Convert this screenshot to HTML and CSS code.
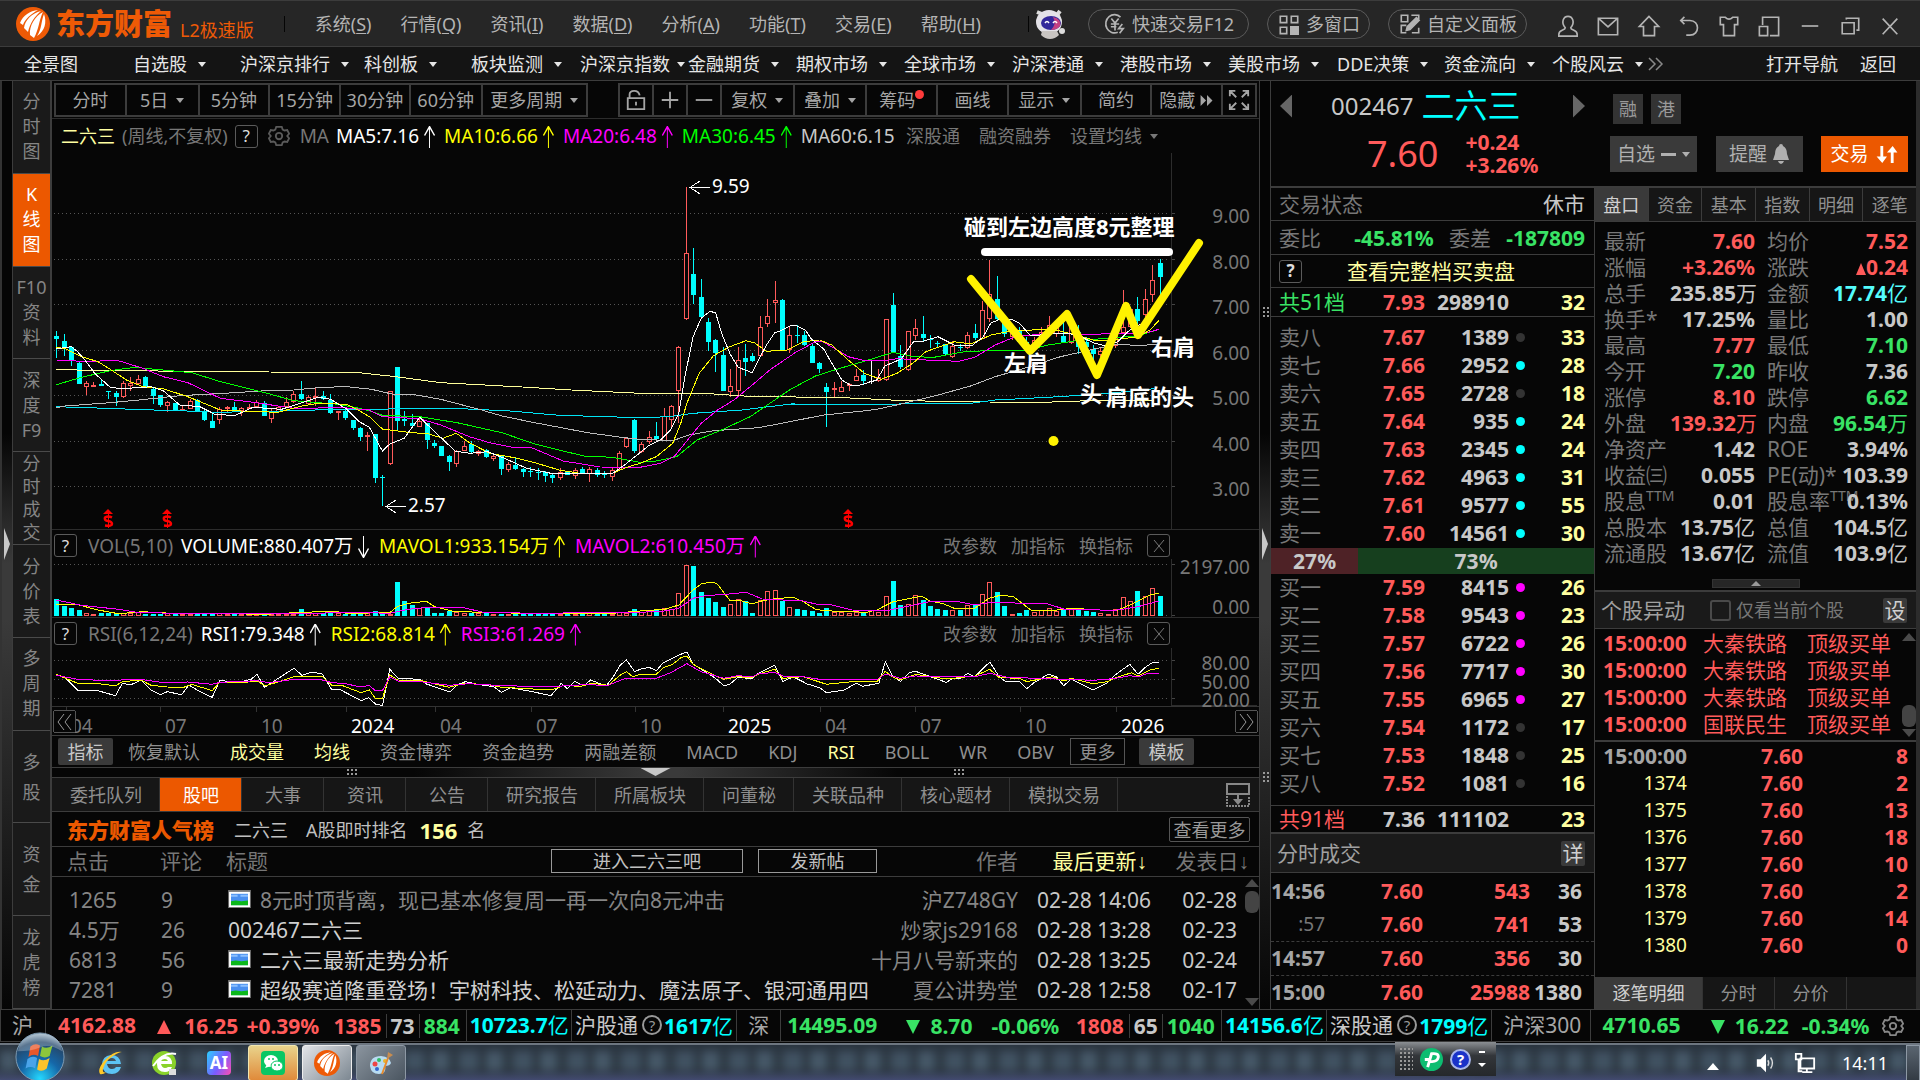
FILE: index.html
```html
<!DOCTYPE html>
<html lang="zh-CN">
<head>
<meta charset="utf-8">
<title>东方财富 L2极速版</title>
<meta name="viewport" content="width=device-width, initial-scale=1">
<link rel="stylesheet" href="styles.css">
</head>
<body>
<svg class="defs" aria-hidden="true">
  <symbol id="flame" viewBox="0 0 34 34"><circle cx="17" cy="17" r="17" fill="#ee5a06"/><path d="M4 16C7 8 14 4 22 3C15 7 9 12 7 18ZM8 21C9 13 16 6 25 4C19 9 14 16 12 25ZM14 28C13 19 19 9 27 5C23 13 23 22 18 31ZM21 29C26 22 25 14 28 7C31 15 29 24 21 29Z" fill="#fff"/></symbol>
  <symbol id="gear" viewBox="0 0 24 24"><path d="M9 2h6l1 3 2 1 3-.5 2 4-2 2.500 2 2.500-2 4-3-.5-2 1-1 3H9l-1-3-2-1-3 .5-2-4L3 12 1 9.500l2-4 3 .5 2-1z" fill="none" stroke="currentColor" stroke-width="2"/><circle cx="12" cy="12" r="3.500" fill="none" stroke="currentColor" stroke-width="2"/></symbol>
  <symbol id="pic" viewBox="0 0 24 19"><rect width="24" height="19" fill="#777"/><rect x="1" y="2" width="22" height="16" fill="#fff"/><path d="M3 4h18v12H3z" fill="#4a90f0"/><path d="M3 5h7v2H3zM13 5h8v2h-8z" fill="#8cc0ff"/><path d="M3 12l5-1 6 1 7-1v5H3z" fill="#0bb81a"/></symbol>
</svg>

<header class="titlebar">
  <svg class="logo"><use href="#flame"/></svg>
  <span class="brand">东方财富</span><span class="edition">L2极速版</span>
  <nav class="menus">
    <button>系统(<u>S</u>)</button><button>行情(<u>Q</u>)</button><button>资讯(<u>I</u>)</button><button>数据(<u>D</u>)</button><button>分析(<u>A</u>)</button><button>功能(<u>T</u>)</button><button>交易(<u>E</u>)</button><button>帮助(<u>H</u>)</button>
  </nav>
  <svg class="robot" viewBox="0 0 32 30"><path d="M3 3l5 2M26 2l-3 4" stroke="#ddd" stroke-width="4"/><ellipse cx="15" cy="13" rx="13" ry="12" fill="#e4e2e8"/><ellipse cx="17" cy="14" rx="10" ry="7" fill="#33289b"/><path d="M19 8q9 2 7 9-3 4-9 4 6-6 2-13z" fill="#c34083"/><path d="M11 14q2-3 4 0M19 14q2-3 4 0" stroke="#fff" stroke-width="1.500" fill="none"/><path d="M8 22h15l2 4q-4 4-9 4t-9-4z" fill="#c9c5c2"/><circle cx="28" cy="22" r="3" fill="#ddd"/></svg>
  <div class="pills">
    <button class="pill wide"><svg viewBox="0 0 24 24"><path d="M18 4.500A9.500 10 0 1 0 15 21M8 6l4 5 4-5M7.500 12h9M7.500 15h6M12 11v8M20 12l-4 5h5l-4 5"/></svg>快速交易F12</button>
    <button class="pill"><svg viewBox="0 0 24 24"><path d="M2.500 3.500h7v7h-7zM14.500 3.500h7v7h-7zM2.500 15.500h7v7h-7z"/><path d="M14 15h8v8h-8z" fill="currentColor"/></svg>多窗口</button>
    <button class="pill"><svg viewBox="0 0 24 24"><path d="M2.500 2.500h7v7h-7zM13.500 2.500h8v4M8 21.500H2.500v-8H8M14 21.500h7.500V16"/><path d="M8 19l1-4L19 5l3 3-10 10z" fill="currentColor"/></svg>自定义面板</button>
  </div>
  <div class="wintools">
    <button aria-label="用户"><svg viewBox="0 0 24 24"><path d="M9 14C4 8 7 1.500 12 1.500S20 8 15 14c0 3 7 2 7 7v2H2v-2c0-5 7-4 7-7z"/></svg></button>
    <button aria-label="邮件"><svg viewBox="0 0 24 24"><path d="M1.500 3.500h21v18h-21zM2 4l10 9L22 4"/></svg></button>
    <button aria-label="主页"><svg viewBox="0 0 24 24"><path d="M12 1.500L1.500 12.500H6v10h12v-10h4.500z"/></svg></button>
    <button aria-label="撤销"><svg viewBox="0 0 24 24"><path d="M7 2L3 6l4 4M3 6h10c11 0 11 16 0 16H9"/></svg></button>
    <button aria-label="换肤"><svg viewBox="0 0 24 24"><path d="M8 2.500q4 4 8 0h5.500v8H18v12H6v-12H2.500v-8z"/></svg></button>
    <button aria-label="弹出"><svg viewBox="0 0 24 24"><path d="M5 11V2.500h17.500v20H13M1.500 12.500h9v10h-9z"/></svg></button>
    <button aria-label="最小化"><svg viewBox="0 0 24 24"><path d="M3 12h18"/></svg></button>
    <button aria-label="还原"><svg viewBox="0 0 24 24"><path d="M3.500 8.500h13v12h-13zM8 5V3.500h13.500v13H19"/></svg></button>
    <button aria-label="关闭"><svg viewBox="0 0 24 24"><path d="M4 4l16 17M20 4L4 21"/></svg></button>
  </div>
</header>

<nav class="nav">
  <a href="#">全景图</a><a href="#" class="dd">自选股</a><a href="#" class="dd">沪深京排行</a><a href="#" class="dd">科创板</a><a href="#" class="dd">板块监测</a><a href="#" class="dd tight">沪深京指数</a><a href="#" class="dd">金融期货</a><a href="#" class="dd">期权市场</a><a href="#" class="dd">全球市场</a><a href="#" class="dd">沪深港通</a><a href="#" class="dd">港股市场</a><a href="#" class="dd">美股市场</a><a href="#" class="dd">DDE决策</a><a href="#" class="dd">资金流向</a><a href="#" class="dd">个股风云</a><a href="#" aria-label="更多"><svg class="chev" viewBox="0 0 16 14"><path d="M1 1l6 6-6 6M8 1l6 6-6 6"/></svg></a><a href="#">打开导航</a><a href="#">返回</a>
</nav>

<main class="main">
  <div class="gutter left"><i class="grip-arrow"></i></div>
  <nav class="side">
    <a href="#">分<br>时<br>图</a><a href="#" class="on">K<br>线<br>图</a><a href="#">F10<br>资<br>料</a><a href="#">深<br>度<br>F9</a><a href="#" class="four">分<br>时<br>成<br>交</a><a href="#">分<br>价<br>表</a><a href="#">多<br>周<br>期</a><a href="#" class="two">多<br>股</a><a href="#" class="two">资<br>金</a><a href="#">龙<br>虎<br>榜</a>
  </nav>

  <section class="work">
    <div class="tools">
      <div class="periods">
        <button>分时</button><button class="dd">5日</button><button>5分钟</button><button>15分钟</button><button>30分钟</button><button>60分钟</button><button class="dd">更多周期</button>
      </div>
      <div class="actions">
        <button aria-label="锁定"><svg viewBox="0 0 24 24"><path d="M3 10h18v12H3zM5 10V6q0-4 5-4t6 5M12 14v4"/></svg></button><button aria-label="放大"><svg viewBox="0 0 24 24"><path d="M3 12h18M12 3v18"/></svg></button><button aria-label="缩小"><svg viewBox="0 0 24 24"><path d="M3 12h18"/></svg></button><button class="dd">复权</button><button class="dd">叠加</button><button class="new">筹码</button><button>画线</button><button class="dd">显示</button><button>简约</button><button>隐藏<svg class="ff" viewBox="0 0 14 12"><path d="M0 0l6 6-6 6zM7 0l6 6-6 6z"/></svg></button><button aria-label="全屏"><svg viewBox="0 0 24 24"><path d="M2 8V2h6M16 2h6v6M22 16v6h-6M8 22H2v-6M3 3l6 6M21 3l-6 6M21 21l-6-6M3 21l6-6"/></svg></button>
      </div>
    </div>

    <div class="info">
      <span class="pale">二六三</span><span class="dim">(周线,不复权)</span><button class="q">?</button><svg class="gear"><use href="#gear"/></svg><span class="dim ma">MA</span>
      <span class="white ma">MA5:7.16<i class="up"></i></span><span class="yellow ma">MA10:6.66<i class="up"></i></span><span class="magenta ma">MA20:6.48<i class="up"></i></span><span class="lime ma">MA30:6.45<i class="up"></i></span><span class="silver ma">MA60:6.15</span>
      <span class="links dim"><a href="#">深股通</a><a href="#">融资融券</a><a href="#" class="dd">设置均线</a></span>
    </div>

    <svg class="chart" id="price" viewBox="0 0 1207 376" role="img" aria-label="周K线图"></svg>

    <div class="subhead">
      <button class="q">?</button><span class="dim">VOL(5,10)</span><span class="white">VOLUME:880.407万<i class="down"></i></span><span class="yellow">MAVOL1:933.154万<i class="up"></i></span><span class="magenta">MAVOL2:610.450万<i class="up"></i></span>
      <span class="ops"><a href="#">改参数</a><a href="#">加指标</a><a href="#">换指标</a><button class="q" aria-label="关闭"><svg viewBox="0 0 12 14"><path d="M1 1l10 12M11 1L1 13"/></svg></button></span>
    </div>
    <svg class="chart" id="volume" viewBox="0 0 1207 58" role="img" aria-label="成交量"></svg>

    <div class="subhead">
      <button class="q">?</button><span class="dim">RSI(6,12,24)</span><span class="white">RSI1:79.348<i class="up"></i></span><span class="yellow">RSI2:68.814<i class="up"></i></span><span class="magenta">RSI3:61.269<i class="up"></i></span>
      <span class="ops"><a href="#">改参数</a><a href="#">加指标</a><a href="#">换指标</a><button class="q" aria-label="关闭"><svg viewBox="0 0 12 14"><path d="M1 1l10 12M11 1L1 13"/></svg></button></span>
    </div>
    <svg class="chart" id="rsi" viewBox="0 0 1207 59" role="img" aria-label="RSI"></svg>
    <svg class="chart" id="dates" viewBox="0 0 1207 28"></svg>

    <div class="indicators">
      <button class="solid">指标</button>
      <div class="names"><button>恢复默认</button><button class="pale">成交量</button><button class="pale">均线</button><button>资金博弈</button><button>资金趋势</button><button>两融差额</button><button>MACD</button><button>KDJ</button><button class="pale">RSI</button><button>BOLL</button><button>WR</button><button>OBV</button></div>
      <button class="outline">更多</button><button class="solid">模板</button>
    </div>
    <div class="splitter"><i class="dots"></i><i class="tri"></i><i class="dots"></i></div>

    <div class="tabs">
      <button>委托队列</button><button class="on">股吧</button><button>大事</button><button>资讯</button><button>公告</button><button>研究报告</button><button>所属板块</button><button>问董秘</button><button>关联品种</button><button>核心题材</button><button>模拟交易</button>
      <svg class="dock" viewBox="0 0 24 24"><path d="M1 1h22v10H1zM12 11v8" fill="none" stroke="#888" stroke-width="2"/><path d="M7 16h10l-5 6z" fill="#888"/><path d="M1 13v10h22V13" fill="none" stroke="#aaa" stroke-width="1.500" stroke-dasharray="2 1"/></svg>
    </div>
    <div class="rank"><b class="rank-logo">东方财富人气榜</b><span>二六三</span><span>A股即时排名</span><strong>156</strong><span>名</span><button>查看更多</button></div>

    <div class="posts">
      <table>
        <colgroup><col class="p1"><col class="p2"><col><col class="p4"><col class="p5"><col class="p6"><col class="p7"></colgroup>
        <thead><tr><th>点击</th><th>评论</th><th><div class="thead-title">标题<button class="enter">进入二六三吧</button><button class="post">发新帖</button></div></th><th>作者</th><th class="pale">最后更新<i class="arr">↓</i></th><th colspan="2">发表日<i class="arr">↓</i></th></tr></thead>
        <tbody>
          <tr><td>1265</td><td>9</td><td class="read"><svg><use href="#pic"/></svg>8元时顶背离，现已基本修复周一再一次向8元冲击</td><td>沪Z748GY</td><td>02-28 14:06</td><td>02-28</td><td></td></tr>
          <tr><td>4.5万</td><td>26</td><td>002467二六三</td><td>炒家js29168</td><td>02-28 13:28</td><td>02-23</td><td></td></tr>
          <tr><td>6813</td><td>56</td><td><svg><use href="#pic"/></svg>二六三最新走势分析</td><td>十月八号新来的</td><td>02-28 13:25</td><td>02-24</td><td></td></tr>
          <tr><td>7281</td><td>9</td><td><svg><use href="#pic"/></svg>超级赛道隆重登场！宇树科技、松延动力、魔法原子、银河通用四</td><td>夏公讲势堂</td><td>02-28 12:58</td><td>02-17</td><td></td></tr>
        </tbody>
      </table>
      <div class="scroll"><i class="thumb"></i></div>
    </div>
  </section>

  <div class="gutter mid"><i class="dots"></i><i class="grip-arrow"></i><i class="dots"></i></div>

  <div class="rail">
    <section class="quote">
      <div class="quote-main">
        <div class="symbol"><button class="prev" aria-label="上一只"></button><span class="code">002467</span><span class="name">二六三</span><button class="next" aria-label="下一只"></button></div>
        <div class="last"><span class="px">7.60</span><span class="chg">+0.24<br>+3.26%</span></div>
      </div>
      <div class="quote-side">
        <div class="tags"><span>融</span><span>港</span></div>
        <div class="btns"><button>自选<i class="minus"></i><i class="caret"></i></button><button>提醒<svg viewBox="0 0 16 20"><path d="M8 0q2 0 2 2 4 2 4 8l2 6H0l2-6q0-6 4-8 0-2 2-2zM5 17h6q-1 3-3 3t-3-3z"/></svg></button><button class="trade">交易<svg viewBox="0 0 24 18"><path d="M5 0h3v11h4l-5 7-6-7h4zM16 18h3V7h4l-5-7-6 7h4z"/></svg></button></div>
      </div>
    </section>
    <div class="cols">
      <section class="book">
        <div class="bar h33"><span>交易状态</span><span class="silver">休市</span></div>
        <div class="bar h34"><span>委比</span><b class="g">-45.81%</b><span>委差</span><b class="g">-187809</b></div>
        <div class="bar h33 full"><button class="q">?</button><a href="#" class="pale">查看完整档买卖盘</a></div>
        <table class="lv sum"><tr><th class="g">共51档</th><td class="r">7.93</td><td>298910</td><td></td><td>32</td></tr></table>
        <table class="lv sell">
          <tr><th>卖八</th><td class="r">7.67</td><td>1389</td><td><i class="dot"></i></td><td>33</td></tr>
          <tr><th>卖七</th><td class="r">7.66</td><td>2952</td><td><i class="dot c"></i></td><td>28</td></tr>
          <tr><th>卖六</th><td class="r">7.65</td><td>2728</td><td><i class="dot"></i></td><td>18</td></tr>
          <tr><th>卖五</th><td class="r">7.64</td><td>935</td><td><i class="dot c"></i></td><td>24</td></tr>
          <tr><th>卖四</th><td class="r">7.63</td><td>2345</td><td><i class="dot c"></i></td><td>24</td></tr>
          <tr><th>卖三</th><td class="r">7.62</td><td>4963</td><td><i class="dot c"></i></td><td>31</td></tr>
          <tr><th>卖二</th><td class="r">7.61</td><td>9577</td><td><i class="dot c"></i></td><td>55</td></tr>
          <tr><th>卖一</th><td class="r">7.60</td><td>14561</td><td><i class="dot c"></i></td><td>30</td></tr>
        </table>
        <div class="ratio"><b style="width:27%">27%</b><b style="width:73%">73%</b></div>
        <table class="lv buy">
          <tr><th>买一</th><td class="r">7.59</td><td>8415</td><td><i class="dot m"></i></td><td>26</td></tr>
          <tr><th>买二</th><td class="r">7.58</td><td>9543</td><td><i class="dot m"></i></td><td>23</td></tr>
          <tr><th>买三</th><td class="r">7.57</td><td>6722</td><td><i class="dot m"></i></td><td>26</td></tr>
          <tr><th>买四</th><td class="r">7.56</td><td>7717</td><td><i class="dot m"></i></td><td>30</td></tr>
          <tr><th>买五</th><td class="r">7.55</td><td>6965</td><td><i class="dot m"></i></td><td>27</td></tr>
          <tr><th>买六</th><td class="r">7.54</td><td>1172</td><td><i class="dot"></i></td><td>17</td></tr>
          <tr><th>买七</th><td class="r">7.53</td><td>1848</td><td><i class="dot"></i></td><td>25</td></tr>
          <tr><th>买八</th><td class="r">7.52</td><td>1081</td><td><i class="dot"></i></td><td>16</td></tr>
        </table>
        <table class="lv sum last-sum"><tr><th class="r">共91档</th><td>7.36</td><td>111102</td><td></td><td>23</td></tr></table>
        <div class="panel-head"><span>分时成交</span><button>详</button></div>
        <table class="deals">
          <tr><td>14:56</td><td>7.60</td><td>543</td><td>36</td></tr>
          <tr class="dash"><td class="thin">:57</td><td>7.60</td><td>741</td><td>53</td></tr>
          <tr class="dash"><td>14:57</td><td>7.60</td><td>356</td><td>30</td></tr>
          <tr><td>15:00</td><td>7.60</td><td>25988</td><td>1380</td></tr>
        </table>
      </section>

      <section class="detail">
        <div class="rtabs"><button class="on">盘口</button><button>资金</button><button>基本</button><button>指数</button><button>明细</button><button>逐笔</button></div>
        <table class="facts">
          <tr><th>最新</th><td class="r">7.60</td><th>均价</th><td class="r">7.52</td></tr>
          <tr><th>涨幅</th><td class="r">+3.26%</td><th>涨跌</th><td class="r"><i class="tri-up"></i>0.24</td></tr>
          <tr><th>总手</th><td>235.85<i>万</i></td><th>金额</th><td class="aqua">17.74<i>亿</i></td></tr>
          <tr><th>换手*</th><td>17.25%</td><th>量比</th><td>1.00</td></tr>
          <tr><th>最高</th><td class="r">7.77</td><th>最低</th><td class="g">7.10</td></tr>
          <tr><th>今开</th><td class="g">7.20</td><th>昨收</th><td>7.36</td></tr>
          <tr><th>涨停</th><td class="r">8.10</td><th>跌停</th><td class="g">6.62</td></tr>
          <tr><th>外盘</th><td class="r">139.32<i>万</i></td><th>内盘</th><td class="g">96.54<i>万</i></td></tr>
          <tr><th>净资产</th><td>1.42</td><th>ROE</th><td>3.94%</td></tr>
          <tr><th>收益<small>㈢</small></th><td>0.055</td><th>PE(动)*</th><td>103.39</td></tr>
          <tr><th>股息<sup>TTM</sup></th><td>0.01</td><th>股息率<sup>TTM</sup></th><td>0.13%</td></tr>
          <tr><th>总股本</th><td>13.75<i>亿</i></td><th>总值</th><td>104.5<i>亿</i></td></tr>
          <tr><th>流通股</th><td>13.67<i>亿</i></td><th>流值</th><td>103.9<i>亿</i></td></tr>
        </table>
        <button class="fold" aria-label="收起"><i></i></button>
        <div class="panel-head moves-head"><span>个股异动</span><label><input type="checkbox">仅看当前个股</label><button>设</button></div>
        <div class="moves">
          <table>
            <tr><td>15:00:00</td><td>大秦铁路</td><td>顶级买单</td></tr>
            <tr><td>15:00:00</td><td>大秦铁路</td><td>顶级买单</td></tr>
            <tr><td>15:00:00</td><td>大秦铁路</td><td>顶级买单</td></tr>
            <tr><td>15:00:00</td><td>国联民生</td><td>顶级买单</td></tr>
          </table>
          <div class="scroll low"><i class="thumb"></i></div>
        </div>
        <table class="ticks">
          <tr><td class="time">15:00:00</td><td>7.60</td><td>8</td></tr>
          <tr><td>1374</td><td>7.60</td><td>2</td></tr>
          <tr><td>1375</td><td>7.60</td><td>13</td></tr>
          <tr><td>1376</td><td>7.60</td><td>18</td></tr>
          <tr><td>1377</td><td>7.60</td><td>10</td></tr>
          <tr><td>1378</td><td>7.60</td><td>2</td></tr>
          <tr><td>1379</td><td>7.60</td><td>14</td></tr>
          <tr><td>1380</td><td>7.60</td><td>0</td></tr>
        </table>
        <div class="btabs"><button class="on">逐笔明细</button><button>分时</button><button>分价</button></div>
      </section>
    </div>
  </div>
  <div class="edge"></div>
</main>

<footer class="status">
  <span class="sep idx">沪</span><b class="r n1">4162.88</b><b class="r"><i class="tri-up"></i></b><b class="r">16.25</b><b class="r">+0.39%</b><b class="r">1385</b><b class="sep-s">73</b><b class="g sep-s">884</b><b class="cy sep">10723.7<i>亿</i></b><span class="sep lab">沪股通<em>?</em></span><b class="cy">1617<i>亿</i></b><span class="sep idx">深</span><b class="g sep n1">14495.09</b><b class="g"><i class="tri-dn"></i></b><b class="g">8.70</b><b class="g">-0.06%</b><b class="r">1808</b><b class="sep-s">65</b><b class="g sep-s">1040</b><b class="cy sep">14156.6<i>亿</i></b><span class="sep lab">深股通<em>?</em></span><b class="cy">1799<i>亿</i></b><span class="sep idx">沪深300</span><b class="g sep n2">4710.65</b><b class="g"><i class="tri-dn"></i></b><b class="g">16.22</b><b class="g">-0.34%</b><svg class="gear"><use href="#gear"/></svg>
</footer>

<div class="taskbar">
  <div class="glass"><i></i></div>
  <button class="start" aria-label="开始"><svg viewBox="0 0 52 52"><defs><radialGradient id="orb" cx=".5" cy=".95" r=".95"><stop offset="0" stop-color="#25d8ff"/><stop offset=".45" stop-color="#1567a8"/><stop offset=".8" stop-color="#24486c"/><stop offset="1" stop-color="#a9c0d0"/></radialGradient></defs><circle cx="26" cy="26" r="25" fill="url(#orb)" stroke="#7f9db5"/><path d="M16 15q5-4 10-1l-2 11q-5-3-10 1z" fill="#e8572a"/><path d="M28 15q5 3 11-1l-3 11q-5 3-10 0z" fill="#8cc63c"/><path d="M13 28q5-4 10-1l-2 11q-5-3-10 0z" fill="#4aa4ea"/><path d="M25 28q5 3 11-1l-3 11q-5 4-10 1z" fill="#fdc42d"/><path d="M3 20Q6 3 26 2t23 18Q36 12 26 16T3 20z" fill="#fff" opacity=".25"/></svg></button>
  <button class="app" aria-label="IE"><svg viewBox="0 0 26 26"><path d="M23 14H9q1 5 5 5 3 0 4-2h5q-2 7-9 7-9 0-10-9Q4 6 13 5q9 0 10 9zM9 11h9q-1-3-4-3-4 0-5 3z" fill="#5cc4f5"/><path d="M24 2q-7-2-17 8-8 9-5 14 2 1 7-2-5 2-4-3Q7 11 15 6q6-4 9-4z" fill="#ffc928"/></svg></button>
  <button class="app" aria-label="浏览器"><svg viewBox="0 0 26 26"><circle cx="12" cy="13" r="12" fill="#8ad22a"/><path d="M20 14H9q1 4 4 4 2 0 3-1h4q-2 5-7 5-8 0-8-8 0-8 8-8 7 0 7 8zM9 11h7q-1-2-3-2-3 0-4 2z" fill="#fff"/><path d="M1 16Q12 1 24 4" stroke="#fff" fill="none" stroke-width="2"/><path d="M17 19h7v6h-7z" fill="#ddd"/></svg></button>
  <button class="app" aria-label="AI"><span class="ai">AI</span></button>
  <button class="app win wechat" aria-label="微信"><svg viewBox="0 0 26 26"><rect x="1" y="1" width="24" height="24" rx="4" fill="#09c764"/><ellipse cx="11" cy="11" rx="7" ry="6" fill="#fff"/><ellipse cx="17" cy="16" rx="6" ry="5" fill="#fff" stroke="#09c764"/><path d="M5 18l2-4 4 2z" fill="#fff"/><g fill="#09c764"><circle cx="9" cy="9" r="1"/><circle cx="13" cy="9" r="1"/><circle cx="15" cy="15" r="1"/><circle cx="19" cy="15" r="1"/></g></svg></button>
  <button class="app win active" aria-label="东方财富"><svg><use href="#flame"/></svg></button>
  <button class="app win" aria-label="画图"><svg viewBox="0 0 26 26"><path d="M2 16Q2 6 13 6q9 1 10 7-1 3-6 3 2 7-6 8-8 0-9-8z" fill="#b8dcf2"/><circle cx="7" cy="14" r="2.500" fill="#e44"/><circle cx="11" cy="10" r="2" fill="#3b6"/><circle cx="17" cy="11" r="2" fill="#e9b52c"/><circle cx="9" cy="19" r="2" fill="#36c"/><path d="M14 24l6-16" stroke="#e78b2c" stroke-width="2"/><path d="M19 9l1-7 5 3z" fill="#c98d4f"/></svg></button>
  <div class="langbar"><i class="dots"></i><svg viewBox="0 0 24 24"><circle cx="12" cy="12" r="12" fill="#0dbd71"/><path d="M8 20l4-14q8-1 7 4t-9 4M5 12h5" fill="none" stroke="#fff" stroke-width="3"/></svg><span class="help">?</span><svg class="lb" viewBox="0 0 8 24"><path d="M1 4h6v2H1zM0 16h8l-4 4z" fill="#fff"/></svg></div>
  <div class="tray">
    <svg class="t-up" viewBox="0 0 12 8"><path d="M6 0l6 7H0z" fill="#fff"/></svg>
    <svg class="t-ic" viewBox="0 0 24 24"><path d="M2 8h4l6-6v20l-6-6H2z" fill="#fff"/><path d="M14 9q2 3 0 6M17 6q4 6 0 12" stroke="#ddd" fill="none" stroke-width="1.500"/></svg>
    <svg class="t-ic" viewBox="0 0 24 24"><path d="M7 7h15v11H7zM14 18v4M9 22h11M2 2h6v6H2zM5 8v13h4" stroke="#fff" fill="none" stroke-width="2"/></svg>
    <time>14:11</time>
  </div>
  <button class="desk" aria-label="显示桌面"></button>
</div>
<script src="chart.js"></script>
</body>
</html>
```

FILE: styles.css
```css
*{box-sizing:border-box}
html,body{margin:0;padding:0}
body{background:#060606;color:#8f8f8f;font:18px/24px "Noto Sans","Noto Sans CJK SC",sans-serif;min-height:100vh;display:flex;flex-direction:column;overflow-x:hidden}
button{background:none;border:0;padding:0;margin:0;color:inherit;font:inherit;white-space:nowrap}
a{color:inherit;text-decoration:none;white-space:nowrap}
i,em{font-style:normal}
table{border-collapse:collapse;border-spacing:0;table-layout:fixed;width:100%}
th,td{padding:0;font-weight:400;white-space:nowrap}
.defs{display:none}
.r{color:#ff5a5a !important}.g{color:#39e365 !important}.cy{color:#0ff}.aqua{color:#54fcfc !important}
.pale{color:#ffffa0 !important}.white{color:#fff}.yellow{color:#ff0}.magenta{color:#f0f}.lime{color:#0f0}.silver{color:#c8c8c8}.dim{color:#777}
.dd::after{content:"";display:inline-block;border:4px solid transparent;border-top:5px solid currentColor;border-bottom:0;margin-left:8px;vertical-align:4px}

/* title bar */
.titlebar{height:47px;background:#262626;border-top:1px solid #3c3c3c;border-bottom:1px solid #3c3c3c;display:flex;align-items:center;color:#b4b4b4;padding-left:16px}
.logo{width:34px;height:34px;flex:none}
.brand{font-weight:900;font-size:29px;color:#ee5a06;margin-left:6px;white-space:nowrap}
.edition{color:#ee5a06;margin:12px 30px 0 8px;white-space:nowrap}
.menus{border-left:1px solid #050505;border-right:1px solid #050505;height:16px;display:flex;align-items:center;justify-content:space-between;padding:0 47px 0 30px;flex:1 1 0}
.menus u{text-underline-offset:2px}
.robot{width:32px;height:30px;margin:0 22px 0 5px;flex:none}
.pills{display:flex;gap:18px}
.pill{height:30px;border:1px solid #5a5a5a;border-radius:15px;padding:0 9px;display:flex;align-items:center;gap:5px}
.pill.wide{padding:0 14px}
.pill svg,.wintools svg,.actions svg{width:24px;height:22px;fill:none;stroke:currentColor;stroke-width:1.800}
.wintools{flex:none;width:393px;display:flex;justify-content:space-between;padding:4px 18px 0 29px}
.wintools button{display:flex}

/* navigation */
.nav{height:34px;background:#141414;border-bottom:1px solid #3c3c3c;color:#e6e6e6;padding-left:24px;display:grid;align-items:center;grid-template-columns:109fr 107fr 124fr 107fr 109fr 108fr 108fr 108fr 108fr 108fr 108fr 109fr 107fr 108fr 96fr 118fr 94fr 60fr}
.nav a{min-width:0}
.nav .dd::after{margin-left:11px}
.nav .dd.tight::after{margin-left:7px}
.chev{width:16px;height:14px;fill:none;stroke:#888;stroke-width:1.500;display:block}

.main{display:flex;flex:1 0 auto}
.gutter{background:linear-gradient(#050505 0 38%,#3a3a3a 52%,#3a3a3a 58%,#060606);flex:none;position:relative}
.gutter.left{width:12px;border-left:2px solid #333}
.gutter.mid{width:10px}
.gutter .grip-arrow{position:absolute;left:2px;top:447px;width:6px;height:32px;background:#c8c8c8;clip-path:polygon(0 0,100% 50%,0 100%)}
.dots{display:block;width:12px;height:8px;background:radial-gradient(#999 1px,transparent 1px) 0 0/4px 4px}
.gutter.mid .dots{position:absolute;left:2px;top:225px;width:8px;height:12px}
.gutter.mid .dots:last-child{top:690px}

/* side menu */
.side{width:40px;flex:none;border-left:1px solid #3c3c3c;border-right:2px solid #3c3c3c;background:#1a1a1a;display:flex;flex-direction:column;color:#858585}
.side a{flex:1;display:flex;align-items:center;justify-content:center;text-align:center;line-height:25px;border-bottom:1px solid #4a4a4a}
.side .on{background:#ec5800;color:#fff}
.side .four{line-height:23px}
.side .two{line-height:30px}

/* chart column */
.work{flex:1 1 0;min-width:0;border-right:1px solid #3c3c3c}
.tools{height:38px;padding:2px 2px 0 2px;display:flex;border-bottom:1px solid #2c2c2c;color:#a5a5a5}
.periods,.actions{display:grid;height:34px;border-left:2px solid #3c3c3c}
.periods{flex:534 1 0;grid-template-columns:71fr 73fr 71fr 71fr 70fr 72fr 106fr;margin-right:30px}
.actions{flex:639 1 0;grid-template-columns:34fr 34fr 34fr 73fr 73fr 71fr 71fr 73fr 71fr 71fr 34fr}
.periods button,.actions button{min-width:0;border:2px solid #3c3c3c;border-left:0;display:flex;align-items:center;justify-content:center}
.actions svg{stroke-width:2}
.actions .ff{width:14px;height:11px;fill:currentColor;stroke:none;margin-left:5px}
.new::after{content:"";width:9px;height:9px;border-radius:50%;background:#ff3b3b;margin-top:-12px}
.info{height:34px;margin-left:9px;display:flex;align-items:center;white-space:nowrap;padding-right:101px;gap:7px}
.ma,.subhead{font-size:19px}
.q{width:23px;height:23px;border:1px solid #5a5a5a;border-radius:3px;color:#ddd;font-size:17px;line-height:20px;text-align:center;flex:none}
.gear{width:22px;height:22px;color:#5a5a5a;flex:none;margin:0 3px}
.up,.down{display:inline-block;width:11px;height:22px;margin:0 5px;vertical-align:-5px;background:currentColor;clip-path:polygon(5px 0,6px 0,11px 9px,10px 10px,6px 3px,6px 22px,5px 22px,5px 3px,1px 10px,0 9px)}
.info .up{margin:0 2px 0 5px}
.down{transform:rotate(180deg)}
.links{margin-left:auto;display:flex;gap:19px}
.chart{display:block;width:100%;height:auto}
.chart path,.chart rect,.chart polyline{shape-rendering:crispEdges}
.chart .smooth{shape-rendering:auto}
.subhead{height:30px;border-top:1px solid #2c2c2c;display:flex;align-items:center;padding:2px 89px 0 2px;white-space:nowrap;gap:5px}
.subhead .q+span{margin:0 3px 0 6px}
.ops{margin-left:auto;display:flex;gap:14px;color:#777;font-size:18px;align-items:center}
.ops svg{width:12px;height:14px;stroke:#777;fill:none;display:block;margin:auto}
#rsi{margin-top:1px}
.axis{fill:#777;font-size:19px;text-anchor:end}
.call{fill:#fff;font-size:19px}
.note{fill:#fff;font-size:22px;font-weight:700}
.date{fill:#777;font-size:19px}.date.year{fill:#fff}
.indicators{height:32px;border-top:1px solid #3c3c3c;display:flex;align-items:center;padding:0 65px 0 6px}
.indicators .solid{background:#3a3a3a;color:#c8c8c8;width:55px;height:27px;border-radius:2px}
.indicators .outline{border:1px solid #555;width:55px;height:27px;margin-right:14px}
.names{flex:1;display:flex;justify-content:space-between;padding:0 16px 0 15px}
.splitter{height:11px;border-top:1px solid #3c3c3c;border-bottom:1px solid #3c3c3c;background:linear-gradient(90deg,#060606 30%,#3a3a3a 50%,#3a3a3a 52%,#060606 70%);display:flex;justify-content:space-between;padding:0 294px}
.tri{width:30px;height:8px;background:#c8c8c8;clip-path:polygon(0 0,100% 0,50% 100%)}
.tabs{height:34px;background:#161616;border-bottom:1px solid #3c3c3c;display:flex;align-items:stretch}
.tabs button{padding:1px 17px 0 18px;min-width:82px;border-right:1px solid #333}
.tabs .on{background:#ec5800;color:#fff}
.dock{width:24px;height:24px;margin:5px 9px 0 auto}
.rank{height:35px;border-bottom:1px solid #3c3c3c;display:flex;align-items:center;padding:1px 9px 0 15px;color:#c0c0c0;white-space:nowrap}
.rank-logo{color:#ec5800;font-size:21px;font-weight:900;margin-right:20px}
.rank span+span{margin-left:18px}
.rank strong{color:#ffffa0;font-size:22px;margin:0 10px 0 12px}
.rank button{margin-left:auto;border:1px solid #555;border-radius:2px;color:#999;width:81px;height:25px;line-height:22px;font-size:18px}
.posts{position:relative;font-size:21px;padding-bottom:4px}
.posts col.p1{width:108px}.posts col.p2{width:66px}.posts col.p4{width:150px}.posts col.p5{width:133px}.posts col.p6{width:86px}.posts col.p7{width:22px}
.posts thead tr{height:29px;border-bottom:1px solid #3c3c3c}
.posts th{text-align:left;color:#777}
.posts th:first-child{padding-left:15px}
.posts td:first-child{padding-left:17px}
.posts td{line-height:30px;color:#858585}
.posts td:nth-child(2){padding-left:1px}
.posts th:nth-child(n+4),.posts td:nth-child(n+4){text-align:right}
.posts th:nth-child(5){padding-right:4px}
.posts th:last-child{padding-right:10px}
.posts td:nth-child(3){color:#d0d0d0;padding-left:2px}
.posts td.read{color:#858585}
.posts td:nth-child(5),.posts td:nth-child(6){color:#c8c8c8}
.posts td svg{width:23px;height:18px;margin-right:9px;vertical-align:0}
.posts tbody::before{content:"";display:block;height:8px}
.arr{font-family:"Liberation Sans",sans-serif}
.thead-title{display:flex;align-items:center}
.thead-title button{border:1px solid #999;height:24px;line-height:20px;font-size:18px;color:#c0c0c0;flex:none}
.thead-title .enter{width:192px;margin:0 15px 0 283px}
.thead-title .post{width:119px}
.scroll{position:absolute;right:0;top:32px;bottom:3px;width:14px}
.scroll::before,.scroll::after{content:"";position:absolute;left:0;border:7px solid transparent}
.scroll::before{top:0;border-top:0;border-bottom:8px solid #4a4a4a}
.scroll::after{bottom:0;border-bottom:0;border-top:8px solid #4a4a4a}
.thumb{position:absolute;left:0;top:12px;width:14px;height:22px;border-radius:6px;background:#444}

/* quote rail */
.rail{flex:none;width:646px;display:flex;flex-direction:column;border-left:1px solid #3c3c3c}
.quote{height:107px;border-bottom:2px solid #3c3c3c;display:flex}
.quote-main{width:339px}
.symbol{display:flex;align-items:center;height:50px;padding:0 25px 0 9px}
.code{font-size:24px;color:#c8c8c8;margin-left:39px}
.name{font-size:33px;color:#0ff;margin-left:8px}
.prev,.next{width:12px;height:23px;background:#666}
.prev{clip-path:polygon(100% 0,100% 100%,0 50%)}
.next{clip-path:polygon(0 0,100% 50%,0 100%);margin-left:auto}
.last{display:flex;align-items:center;color:#ff5a5a;padding-left:96px;height:46px}
.px{font-size:36px}
.chg{font-size:21px;font-weight:700;line-height:23px;margin-left:27px}
.quote-side{flex:1;padding:13px 8px 0 0}
.tags{display:flex;gap:8px;padding-left:3px}
.tags span{width:30px;height:30px;line-height:30px;background:#333;text-align:center;color:#999}
.btns{display:flex;justify-content:space-between;margin-top:12px}
.btns button{width:87px;height:36px;background:#3a3a3a;color:#b0b0b0;display:flex;align-items:center;justify-content:center;gap:6px;font-size:19px}
.btns .trade{background:#ec5800;color:#fff}
.btns svg{width:16px;height:20px;fill:currentColor}
.btns .trade svg{width:24px;height:17px}
.minus{width:15px;height:3px;background:#b0b0b0}
.caret{border:4px solid transparent;border-top:5px solid #b0b0b0;border-bottom:0}
.cols{display:flex;flex:1}
.book{width:324px;border-right:1px solid #3c3c3c;font-size:21px}
.bar{display:flex;justify-content:space-between;align-items:center;padding:0 9px 0 8px;border-bottom:1px solid #3c3c3c;color:#777}
.h33{height:33px}.h34{height:34px}
.bar .g:nth-child(2){margin-left:18px}
.bar.full{justify-content:flex-start}
.bar.full a{margin-left:45px}
.bar .q{width:23px;font-weight:700}
.lv th{text-align:left;padding-left:8px;color:#777}
.lv td{font-weight:700;text-align:right;color:#c8c8c8}
.lv th:first-child{width:70px}
.lv td:nth-child(2),.lv td:nth-child(3){width:84px}
.lv td:nth-child(4){width:22px;text-align:center}
.lv td:last-child{color:#ffffa0;padding-right:9px}
.lv tr{height:28px}
.sum{border-bottom:1px solid #3c3c3c}
.sell{margin-top:6px}
.ratio{display:flex;height:26px;line-height:26px;margin:1px 0 -1px;color:#c8c8c8}
.ratio b{background:#4e2226;text-align:center}
.ratio b+b{background:#163f1e}
.buy{margin-bottom:8px}
.last-sum{border-top:1px solid #3c3c3c;border-bottom:2px solid #3c3c3c}
.dot{display:inline-block;width:9px;height:9px;border-radius:50%;background:#333;vertical-align:3px}
.dot.c{background:#0ff}.dot.m{background:#f0f}
.panel-head{height:39px;background:#1a1a1a;border-bottom:1px solid #3c3c3c;display:flex;align-items:center;justify-content:space-between;padding:0 9px 0 6px;font-size:21px;color:#a0a0a0;white-space:nowrap}
.panel-head button{width:24px;height:25px;background:#3a3a3a;border-radius:2px;color:#d0d0d0;line-height:24px;flex:none}
.deals{margin-top:2px}
.deals td{font-weight:700;color:#ff5a5a;text-align:right;line-height:33px;height:33px;padding-right:2px}
.deals td:first-child{color:#a5a5a5;width:54px;padding-right:0}
.deals td.thin{font-weight:400;color:#777;font-size:19px}
.deals td:nth-child(2){width:100px}
.deals td:nth-child(3){width:105px;padding-right:0}
.deals td:last-child{color:#c8c8c8;padding-right:12px}
.deals .dash{border-bottom:1px dashed #3c3c3c}

.detail{flex:1;display:flex;flex-direction:column;font-size:21px}
.rtabs{height:34px;display:flex;border-bottom:1px solid #3c3c3c;background:#161616;font-size:18px}
.rtabs button{flex:1;border-right:1px solid #3c3c3c}
.rtabs button:last-child{border-right:0}
.rtabs .on,.btabs .on{background:#3a3a3a;color:#d0d0d0}
.facts{margin:6px 0 13px}
.facts tr{height:26px}
.facts th{text-align:left;color:#777;overflow:visible}
.facts th:nth-child(1){width:75px;padding-left:9px}
.facts td:nth-child(2){width:85px}
.facts th:nth-child(3){width:75px;padding-left:12px}
.facts td{text-align:right;font-weight:700;color:#c8c8c8;direction:rtl;unicode-bidi:plaintext}
.facts td:last-child{padding-right:8px}
.facts td i,.status b i{font-weight:400}
.facts sup{font-size:14px;line-height:10px}
.facts small{font-size:21px}
.tri-up,.tri-dn{display:inline-block;border:7px solid transparent}
.tri-up{border-top:0;border-bottom:14px solid #ff5a5a}
.tri-dn{border-bottom:0;border-top:14px solid #39e365}
.facts .tri-up{border-width:0 5px 12px}
.fold{width:88px;height:9px;background:#262626;border:1px solid #333;margin:0 auto 2px;display:flex;justify-content:center;align-items:center}
.fold i{border:5px solid transparent;border-top:0;border-bottom:5px solid #999}
.moves-head{border-top:2px solid #3c3c3c;height:39px}
.moves-head label{font-size:18px;color:#777;display:flex;align-items:center;margin:0 39px 0 auto}
.moves-head input{appearance:none;width:21px;height:21px;border:2px solid #4a4a4a;border-radius:3px;margin:0 5px 0 0}
.moves{position:relative;padding-bottom:3px;border-bottom:2px solid #3c3c3c}
.moves td{color:#ff5a5a;height:27px}
.moves td:nth-child(1){font-weight:700;width:108px;padding-left:8px}
.moves td:nth-child(2){width:104px}
.moves .scroll{top:4px}
.moves .low .thumb{top:72px}
.ticks tr{height:27px}
.ticks td{color:#ff5a5a;font-weight:700;text-align:right}
.ticks td:first-child{color:#ffffa0;font-weight:400;font-size:19px;width:92px}
.ticks td.time:first-child{color:#a5a5a5;font-weight:700;font-size:21px}
.ticks td:nth-child(2){width:116px}
.ticks td:last-child{padding-right:8px}
.btabs{margin-top:auto;height:32px;background:#161616;display:flex;font-size:18px}
.btabs button{width:72px;border-right:1px solid #333}
.btabs .on{width:108px}
.edge{width:4px;background:#2c2c2c;flex:none}

/* index strip */
.status{height:33px;border-top:1px solid #3c3c3c;border-bottom:1px solid #3c3c3c;display:grid;align-items:center;grid-template-columns:45fr 112fr 27fr 62fr 87fr 52fr 33fr 47fr 105fr 93fr 72fr 44fr 126fr 24fr 61fr 84fr 53fr 33fr 59fr 105fr 93fr 72fr 99fr 120fr 24fr 67fr 80fr 38fr;font-size:21px;white-space:nowrap;color:#a5a5a5}
.status>*{min-width:0}
.status b,.status span{color:#c8c8c8}
.status .cy{color:#0ff}
.status>span,.status .sep{border-left:1px solid #3c3c3c;line-height:31px;padding-left:3px}
.status .sep-s{border-left:1px solid #3c3c3c;padding-left:4px}
.status .idx{padding-left:11px;color:#a5a5a5}
.status .n1{padding-left:6px}
.status .r.n1{border-left:1px solid #3c3c3c;line-height:31px;padding-left:12px}
.status .n2{padding-left:11px}
.status em{display:inline-block;width:20px;height:20px;border:2px solid #999;border-radius:50%;font-size:15px;line-height:16px;text-align:center;vertical-align:2px;margin-left:4px;color:#999}
.status .gear{color:#888;margin:0}

/* taskbar */
.taskbar{height:38px;position:relative;display:flex;align-items:stretch;background:#28313b;border-top:2px solid #6d7680;margin-top:1px}
.glass{position:absolute;inset:0;overflow:hidden;background:linear-gradient(#2a343f 60%,#454d74)}
.glass i{position:absolute;inset:6px 0 10px;filter:blur(4px);background:repeating-linear-gradient(90deg,#465868 0 14px,#2c3742 20px 24px,#415262 30px 44px,#2a343f 50px 54px)}
.start{width:50px;margin-left:15px;position:relative}
.start svg{position:absolute;left:0;top:-13px;width:50px;height:50px}
.app{width:50px;position:relative;display:flex;align-items:center;justify-content:center;margin-left:4px}
.start+.app{margin-left:21px}
.app svg{width:26px;height:26px}
.ai{width:24px;height:24px;border-radius:4px;background:linear-gradient(120deg,#2ad0ff,#7a5cff 55%,#ff4fb0);color:#fff;font-weight:700;font-size:17px}
.win{border:1px solid #8d98a4;border-radius:3px;background:linear-gradient(135deg,#8a949e,#4a5560)}
.app.wechat{background:linear-gradient(#e9d38b,#e08a3a);border-color:#f3e7b0}
.app.active{background:linear-gradient(135deg,#e2e4e8,#7c8791);border-color:#eee}
.langbar{position:relative;margin:-3px 0 5px auto;width:101px;background:linear-gradient(#8b8f93,#33363a 40%,#25282b);display:flex;align-items:center;gap:7px;padding:0 4px;color:#fff}
.langbar svg{width:23px;height:23px}
.langbar .dots{width:14px;height:24px}
.help{width:21px;height:21px;border-radius:50%;background:#1a32c8;border:2px solid #a8b6e8;font-weight:700;font-size:15px;line-height:17px;text-align:center}
.langbar .lb{width:8px;height:24px}
.tray{position:relative;width:410px;display:flex;align-items:center;justify-content:flex-end;color:#fff;padding-right:18px}
.t-up{width:12px;height:8px;margin:8px 35px 0 0}
.t-ic{width:24px;height:22px;margin-right:15px}
.t-ic+time{margin-left:10px}
.desk{position:relative;width:14px;border:1px solid #8d98a4;background:linear-gradient(#5a6570,#333b44)}
```

FILE: chart.js
```js
// Chart samples use a fine grid: 2.45 units per pixel across, 3 units per pixel down.
const X = v => (v / 2.45 - 52).toFixed(1);
const cx = i => 4.3 + 7.405 * i;

// high, body top, body bottom, low, kind (c = down, r = up, w = flat)
const candles = `514,528,537,594,c 522,543,563,588,c 560,562,602,617,c 606,609,671,671,c 662,669,681,706,r 667,675,677,681,r 658,671,678,678,c 693,693,697,717,c 694,699,711,738,c 663,669,711,713,r
652,669,677,692,r 645,657,673,673,r 647,651,680,680,c 680,687,708,732,c 705,705,735,742,c 722,727,738,755,r 729,729,751,751,c 735,747,749,751,r 718,723,748,748,r 718,720,753,753,c
750,752,780,784,c 763,783,804,804,c 742,746,779,792,r 738,742,747,757,r 726,740,750,750,c 742,745,755,768,r 733,741,745,745,r 720,727,743,743,r 723,729,768,768,c 745,756,776,789,r
738,742,758,758,r 711,726,741,741,r 692,703,728,728,r 663,702,717,720,c 706,710,730,730,r 682,708,710,738,r 694,707,717,721,c 702,721,759,762,c 752,754,761,780,r 750,754,775,780,c
780,780,803,810,c 802,803,831,844,c 817,825,832,873,r 822,822,954,970,c 945,951,954,1038,c 694,694,914,914,r 621,621,783,814,c 752,776,783,798,c 761,789,798,803,c 768,783,800,800,r
789,789,839,867,c 841,849,858,864,c 858,858,888,888,c 885,888,906,933,c 870,874,914,920,r 842,857,873,873,r 842,851,876,879,c 870,872,880,888,r 867,871,893,893,c 880,888,897,903,r
888,888,927,944,c 905,912,929,937,r 895,914,927,931,c 924,926,934,950,c 920,933,936,950,c 923,935,938,959,c 933,937,949,966,c 940,944,952,969,c 923,935,953,960,r 932,935,943,945,c
924,930,948,957,r 922,927,940,940,c 920,928,944,966,r 924,930,945,950,c 932,943,947,953,c 922,930,950,962,r 874,880,930,930,r 833,833,861,865,r 778,780,873,880,c 846,851,876,880,r
813,832,848,852,r 787,828,838,843,c 744,768,844,844,r 735,737,779,800,r 559,560,692,790,r 82,280,479,480,r 265,342,405,432,c 358,411,471,471,c 475,486,546,573,c 537,540,578,636,c
560,586,693,693,c 627,679,696,711,r 560,601,695,708,r 552,594,606,648,c 579,588,603,605,c 468,501,588,592,r 417,468,491,500,r 363,420,428,488,r 417,420,570,570,c 500,525,570,579,r
494,526,528,550,c 514,526,556,558,c 552,558,609,609,c 606,609,627,640,c 669,681,696,801,c 666,685,689,711,r 663,681,696,696,r 668,671,673,693,r 626,648,664,664,r 630,645,663,675,c
602,664,666,671,w 626,652,663,665,r 478,478,662,662,r 400,435,578,580,c 556,587,621,627,c 514,514,632,632,r 477,505,530,540,r 468,522,534,543,c 524,536,540,564,c 543,548,552,564,c
552,552,582,587,c 543,558,590,594,r 552,561,564,573,c 516,526,565,567,r 492,519,534,540,c 422,451,537,537,r 300,401,476,486,r 348,417,476,480,c 474,480,521,530,c 502,510,530,541,r
500,510,545,548,c 530,545,565,570,c 530,540,562,566,r 500,515,545,550,r 468,494,510,520,r 490,500,520,530,r 480,528,546,550,c 478,500,548,552,r 496,515,560,582,c 530,545,560,565,c
555,566,582,600,c 562,574,586,592,r 540,550,575,580,r 500,520,560,565,r 390,500,518,520,r 442,446,500,505,r 411,447,483,510,c 387,418,465,480,r 315,361,407,426,r 297,309,351,412,c`
  .split(/\s+/).map(s => s.split(','));

const volumes = [50,29,23,17,10,5,8,8,6,10,9,13,5,6,6,9,5,5,5,5,5,5,10,6,5,6,5,6,5,5,6,5,6,20,9,8,9,9,8,7,7,8,9,14,11,6,101,44,32,24,24,8,8,16,12,8,8,9,8,6,6,5,6,5,7,10,6,5,6,6,5,6,8,5,5,6,12,8,20,13,18,22,24,22,70,154,149,71,53,41,26,36,51,46,10,49,76,79,45,28,22,17,14,8,23,12,12,8,12,8,18,12,61,104,32,37,64,49,29,20,17,19,17,34,37,67,103,71,29,7,8,17,12,19,25,16,18,24,20,16,12,10,7,20,58,46,74,61,85,61];

// Each line has a first half and a second half that starts at x = 1568.
const line = (a, b, color, yMap) => {
  const read = (s, dx) => s.split(' ').map(p => { const [x, y] = p.split(','); return X(+x + dx) + ',' + yMap(+y).toFixed(1); });
  return `<polyline fill="none" stroke="${color}" points="${read(a, 0).concat(read(b, 1568)).join(' ')}"/>`;
};
const dotted = (y, n) => `<path d="M2 ${y}H1115" stroke="#555" stroke-dasharray="1 3"/>` + (n ? `<path d="M1119 ${y}h4" stroke="#444"/>` : '');
const bar = (x, y, h, kind) => kind === 'r'
  ? `<rect x="${x - 2}" y="${y + .5}" width="4" height="${Math.max(1, h - 1)}" fill="#060606" stroke="#ff5a5a"/>`
  : `<rect x="${x - 2.5}" y="${y}" width="5" height="${Math.max(1, h)}" fill="${kind === 'w' ? '#fff' : '#0ff'}"/>`;

// Price pane
const py = v => v / 3 + 7;
let s = '';
[60.5, 106.5, 151.5, 197.5, 242.5, 288.5, 333.5].forEach((y, i) => {
  s += dotted(y, 1) + `<text class="axis" x="1198" y="${y + 9.5}">${9 - i}.00</text>`;
});
s += '<path d="M1119.500 0V376" stroke="#2c2c2c"/>';
candles.forEach(([h, t, b, l, k], i) => {
  const x = Math.round(cx(i)) + .5, color = k === 'r' ? '#ff5a5a' : k === 'w' ? '#fff' : '#0ff';
  s += `<path d="M${x} ${py(+h)}V${py(+l)}" stroke="${color}"/>` + bar(x, Math.round(py(+t)), Math.round((b - t) / 3), k);
});
s += line('138,629 300,632 660,636 880,638 970,650 1080,668 1280,681 1400,690', '0,700 180,702 280,710 480,712 650,722 850,726 990,727 1100,722 1260,722', '#ff9', py);
s += line('138,740 260,745 350,749 440,752 530,757 660,754 800,749 900,749 1000,745 1110,745 1250,753 1370,766', '0,773 70,770 130,760 250,750 370,732 560,733 810,730 870,720 1000,712 1130,702 1260,686', '#00e4f4', py);
s += line('138,743 160,738 270,728 340,720 440,707 550,700 640,693 720,690 790,682 850,680 910,688 960,702 1020,705 1080,718 1180,750 1230,768 1310,788 1440,818 1530,833', '0,838 80,842 120,825 180,812 290,803 360,787 450,765 540,754 580,748 640,732 730,705 810,678 870,650 950,622 1030,590 1110,568 1170,552 1220,557 1272,552', '#bbb', py);
s += line('138,674 200,652 270,632 330,622 380,628 470,638 540,665 640,695 720,722 820,732 870,742 905,752 937,766 1028,770 1120,788 1230,818 1310,852 1430,888 1500,892', '0,907 40,903 90,890 140,840 200,810 270,770 330,720 370,687 430,648 490,625 560,600 620,577 670,590 720,592 800,574 870,572 940,572 1000,555 1080,540 1150,535 1220,527 1272,508', '#0f0', py);
s += line('138,600 200,604 290,602 350,625 400,650 460,668 540,715 620,727 720,745 840,743 905,750 937,770 1028,776 1080,795 1150,830 1200,848 1260,863 1300,862 1380,903 1470,921', '0,922 50,910 85,888 120,835 150,790 190,750 230,720 280,670 320,628 380,578 430,545 445,543 480,568 510,590 550,602 600,602 630,596 700,600 780,604 820,592 870,555 920,530 1000,520 1100,523 1200,520 1240,518 1272,508', '#f0f', py);
s += line('138,562 160,566 200,590 240,605 270,628 310,660 350,680 400,686 460,710 500,730 540,750 590,753 680,757 740,738 780,730 850,733 880,752 905,770 937,807 1000,817 1050,822 1085,835 1118,820 1150,848 1200,880 1260,893 1310,908 1370,930 1420,940 1500,940 1540,920', '0,910 40,890 80,850 100,790 115,730 145,640 180,587 220,560 260,542 280,548 310,574 360,570 400,545 440,540 470,555 510,600 550,640 590,658 630,640 670,608 700,575 770,545 810,552 860,525 900,515 960,510 1010,508 1060,522 1110,540 1160,540 1220,530 1250,510 1272,480', '#ff0', py);
s += line('138,566 175,560 190,575 210,603 232,640 270,682 300,686 370,680 400,692 440,735 490,740 525,762 575,767 620,742 690,748 740,728 780,712 810,718 850,748 880,785 905,802 937,873 955,852 990,835 1028,772 1065,815 1115,873 1150,880 1195,875 1240,897 1290,925 1350,940 1400,942 1500,941 1530,915', '0,878 20,858 50,840 75,810 95,760 110,650 130,530 150,475 170,455 185,457 200,520 220,580 240,622 275,638 290,600 310,555 330,518 345,512 370,496 385,498 405,510 420,537 450,567 470,610 495,660 515,675 540,675 580,660 600,618 640,597 670,545 690,545 730,530 770,555 815,555 840,532 860,488 885,477 910,478 930,490 955,525 980,525 1010,520 1050,520 1080,530 1110,548 1140,558 1170,545 1200,510 1230,490 1272,430', '#fff', py);
s += '<g stroke="#fff" fill="none"><path d="M658 34.500h-20M648 28l-10 6.500 10 6.500M354 353.500h-20M344 347l-10 6.500 10 6.500"/></g>';
s += '<text class="call" x="660" y="40">9.59</text><text class="call" x="356" y="359">2.57</text>';
[56, 115, 796].forEach(x => {
  s += `<g><path class="smooth" d="M${x - 5} 361l5-5 5 5z" fill="red"/><path class="smooth" d="M${x + 4} 364.500q-4-2-7 0-1 3 3 3.500t4 3-7 1.500" fill="none" stroke="red" stroke-width="2.500"/><path d="M${x} 360v15" stroke="red"/></g>`;
});
s += '<path class="smooth" d="M933 99h184" stroke="#fff" stroke-width="8" stroke-linecap="round"/>';
s += '<path class="smooth" d="M919 126L978 198 1015 161 1045 222 1074 153 1086 182 1147 90" fill="none" stroke="#fff200" stroke-width="8" stroke-linecap="round" stroke-linejoin="round"/><circle cx="1001.500" cy="288" r="5" fill="#fff200"/>';
[['碰到左边高度8元整理', 912, 82], ['左肩', 952, 218], ['右肩', 1099, 202], ['头', 1028, 249], ['肩底的头', 1054, 252]].forEach(([t, x, y]) => {
  s += `<text class="note" x="${x}" y="${y}">${t}</text>`;
});
document.getElementById('price').innerHTML = s;

// Volume pane
const vy = v => v / 3 - 29;
s = dotted(5.5, 1) + dotted(56.5, 1) + '<path d="M1119.500 0V58" stroke="#2c2c2c"/>';
volumes.forEach((v, i) => {
  const up = candles[i][4] !== 'c', h = Math.max(2, Math.round(v / 3));
  s += bar(Math.round(cx(i)) + .5, 57 - h, h, up ? 'r' : 'c');
});
s += line('138,223 190,224 240,240 290,251 350,245 420,250 600,252 650,253 740,247 820,244 850,250 955,248 973,230 1000,220 1045,214 1065,230 1110,244 1200,248 1300,250 1500,250', '0,243 60,238 95,225 130,180 150,162 170,157 188,160 220,211 250,213 275,222 300,212 330,206 375,202 400,215 430,238 450,242 555,247 580,240 620,215 690,198 710,213 740,220 770,235 820,235 855,205 885,195 915,200 960,242 1000,243 1060,235 1165,243 1200,225 1250,195 1272,190', '#ff0', vy);
s += line('138,210 200,226 290,238 340,248 450,250 700,250 900,248 955,250 1000,238 1040,233 1140,234 1180,246 1300,250', '0,247 60,243 95,235 130,205 160,197 210,193 260,187 300,207 400,213 430,222 470,225 520,240 600,243 650,230 710,215 780,215 820,225 860,217 1000,222 1040,238 1165,241 1220,230 1272,213', '#f0f', vy);
s += '<text class="axis" x="1198" y="15">2197.00</text><text class="axis" x="1198" y="55">0.00</text>';
document.getElementById('volume').innerHTML = s;

// RSI pane
const ry = v => v / 3 - 118;
s = dotted(12.5, 1) + dotted(31.5, 1) + dotted(50.5, 1) + '<path d="M1119.500 0V57.500H1205" fill="none" stroke="#2c2c2c"/><path d="M0 58.500H1207" stroke="#333"/>';
s += line('138,434 157,440 190,481 240,482 283,497 300,460 320,465 345,450 370,480 393,494 410,485 445,494 463,465 490,485 520,502 538,452 590,456 615,448 630,433 648,472 720,415 740,436 765,426 790,432 812,478 835,480 885,512 903,503 920,522 937,527 955,418 975,445 1028,448 1045,462 1102,486 1120,465 1140,455 1170,463 1210,470 1228,487 1250,473 1300,484 1350,497 1375,460 1390,476 1408,454 1430,468 1447,450 1485,468 1500,445 1520,405 1535,390 1555,425', '0,418 22,412 40,422 57,398 95,375 115,366 130,402 185,445 205,467 220,463 240,442 275,446 290,430 330,405 350,455 375,440 410,462 440,473 457,488 500,480 530,460 545,469 585,460 601,396 620,440 638,454 660,428 675,424 750,457 765,447 783,446 803,430 820,440 857,396 880,440 895,454 930,455 948,476 965,458 1000,433 1020,440 1038,467 1057,447 1110,480 1145,458 1165,434 1200,403 1220,433 1240,410 1255,398 1272,398', '#fff', ry);
s += line('138,432 160,445 190,460 240,461 283,467 300,455 345,450 370,466 410,471 450,472 470,463 520,482 538,457 600,457 630,453 650,468 720,440 790,440 812,465 835,465 885,488 905,480 920,506 937,506 955,435 975,450 1028,451 1100,472 1140,460 1200,465 1230,472 1350,480 1385,465 1420,470 1450,460 1490,466 1520,435 1535,425 1550,440', '0,433 40,433 57,413 80,403 100,383 115,378 130,403 180,435 205,448 240,440 275,443 290,432 330,418 350,445 400,440 457,463 520,455 580,456 601,424 620,442 638,450 675,433 750,447 820,438 857,418 880,443 930,445 948,455 1010,440 1038,453 1057,445 1110,461 1145,455 1165,443 1205,428 1220,438 1250,420 1272,415', '#ff0', ry);
s += line('138,436 190,448 280,453 310,448 345,448 400,458 460,456 520,463 540,457 630,452 660,458 720,448 790,450 810,457 850,462 880,470 905,467 920,482 937,482 955,441 975,453 1030,455 1100,466 1150,461 1230,467 1350,470 1430,464 1490,466 1530,446', '0,447 40,445 75,428 115,401 150,425 205,445 240,437 275,440 290,432 330,427 350,438 400,440 450,450 580,449 601,432 638,445 675,438 820,440 857,430 900,442 1110,451 1160,446 1200,437 1220,441 1240,432 1272,430', '#f0f', ry);
s += '<text class="axis" x="1198" y="22">80.00</text><text class="axis" x="1198" y="41">50.00</text><text class="axis" x="1198" y="59">20.00</text>';
document.getElementById('rsi').innerHTML = s;

// Date axis
s = '';
[[14, '04'], [108, '07'], [204, '10'], [294, '2024'], [383, '04'], [479, '07'], [583, '10'], [671, '2025'], [768, '04'], [863, '07'], [968, '10'], [1064, '2026']].forEach(([x, t]) => {
  s += `<path d="M${x + .5} 0v5" stroke="#333"/><text class="date${t.length > 2 ? ' year' : ''}" x="${x + 5}" y="26">${t}</text>`;
});
s += '<g fill="#060606" stroke="#555"><rect x="1.500" y="3.500" width="22" height="22" rx="2"/><rect x="1183.500" y="3.500" width="22" height="22" rx="2"/></g><path class="smooth" d="M12 7l-6 8 6 8M19 7l-6 8 6 8M1188 7l6 8-6 8M1195 7l6 8-6 8" fill="none" stroke="#999"/>';
document.getElementById('dates').innerHTML = s;
```
